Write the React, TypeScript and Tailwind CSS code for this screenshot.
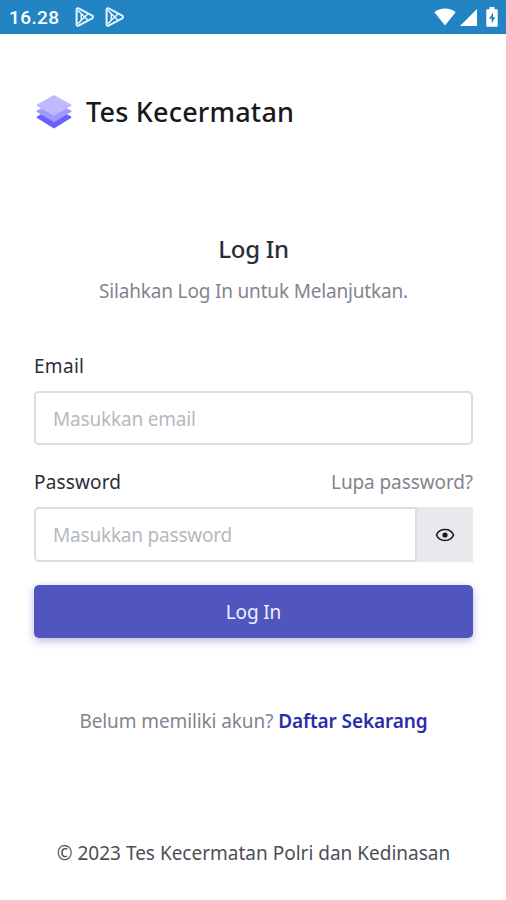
import { useState } from 'react'

function PlayIcon() {
  return (
    <svg viewBox="0 0 20 20" className="h-5 w-5" fill="none" stroke="#e6f5ff" strokeWidth="2" strokeLinejoin="round">
      <path d="M1.600 2.600c0-1.200 1-1.700 2-1.200l13.600 7.200c1.100.7 1.100 2 0 2.700L3.600 18.600c-1 .5-2 0-2-1.200z" />
      <path d="M2.800 3.200 12.800 13M2.800 16.800 12.800 7M6.300 6.600v6.800" strokeWidth="1.600" />
    </svg>
  )
}

function StatusBar() {
  return (
    <div className="flex h-[34px] items-center bg-[#2384c4] pr-[8px] pl-[9px] text-white">
      <span className="w-[66px] pt-px font-[Roboto] text-[19px] leading-none font-medium tracking-[0.4px]">16.28</span>
      <div className="flex gap-[10px]">
        <PlayIcon />
        <PlayIcon />
      </div>
      <div className="ml-auto flex items-center">
        <svg viewBox="0 0 22 18" className="h-[18px] w-[22px]" fill="currentColor">
          <path d="M11 17.5.4 4.2C3.3 1.8 7 .6 11 .6s7.700 1.200 10.600 3.600z" />
        </svg>
        <svg viewBox="0 0 17 17" className="ml-[4px] h-[17px] w-[17px]" fill="currentColor">
          <path d="M17 0v17H0z" />
        </svg>
        <svg viewBox="0 0 12 20" className="ml-[9px] h-[20px] w-[12px]">
          <path d="M3.500 0h5v2.200h2q1.200 0 1.200 1.200v15.100q0 1.200-1.200 1.200h-9q-1.200 0-1.200-1.200V3.400q0-1.200 1.200-1.200h2z" fill="#fff" />
          <path d="M7 5.500 3.200 11.700h2.500v4.800l3.500-6.200H7z" fill="#2384c4" />
        </svg>
      </div>
    </div>
  )
}

function Logo() {
  return (
    <svg viewBox="0 0 36 36" className="h-9 w-9">
      <path d="M1 22.500 18 13l17 9.500q1 .8 0 1.600L18 34.600 1 24.100q-1-.8 0-1.600z" fill="#6860fb" />
      <path d="M1 16.500 18 8l17 8.500q1.200.8 0 1.600L18 28.300 1 18.100q-1.200-.8 0-1.600z" fill="#9e99fd" />
      <path d="M1 10.500 18 1l17 9.500q1.200.8 0 1.600L18 21.800 1 12.100q-1.200-.8 0-1.600z" fill="#bdbaff" />
    </svg>
  )
}

function EyeIcon() {
  return (
    <svg viewBox="0 0 20 14" className="h-[14px] w-5" fill="none" stroke="#17171c">
      <path d="M1.500 7C3 3.500 6 1.500 10 1.500S17 3.500 18.500 7C17 10.500 14 12.500 10 12.500S3 10.500 1.500 7z" strokeWidth="1.600" />
      <circle cx="10" cy="7" r="2.600" fill="#17171c" stroke="none" />
    </svg>
  )
}

export default function App() {
  const [showPassword, setShowPassword] = useState(false)

  return (
    <div className="h-[900px] w-[506px] overflow-hidden bg-white font-['Noto_Sans',sans-serif] text-[19px] text-[#2b2e36]">
      <StatusBar />

      <main className="flex flex-col pr-[33px] pl-[34px]">
        {/* Brand */}
        <div className="mt-[58px] flex h-10 items-center gap-[14px] pl-[2px]">
          <Logo />
          <h1 className="text-[27px] leading-10 font-medium tracking-[0.2px] whitespace-nowrap text-[#17191e]">Tes Kecermatan</h1>
        </div>

        {/* Heading */}
        <div className="mt-[101px] text-center">
          <h2 className="text-2xl leading-8 font-medium tracking-[-0.3px]">Log In</h2>
          <p className="mt-[12px] leading-7 tracking-[-0.18px] whitespace-nowrap text-[#83848f]">Silahkan Log In untuk Melanjutkan.</p>
        </div>

        <form className="mt-[47px] flex flex-col" onSubmit={e => e.preventDefault()}>
          <label htmlFor="email" className="leading-7 tracking-[0.3px]"><span>Email</span></label>
          <input
            id="email"
            type="email"
            placeholder="Masukkan email"
            className="mt-[11px] h-[54px] rounded-[5px] border-2 border-[#dcdde0] px-[17px] pt-px tracking-[-0.18px] outline-none placeholder:text-[#b5b9c0]"
          />

          <div className="mt-[23px] flex justify-between leading-7">
            <label htmlFor="password" className="tracking-[0.15px]"><span>Password</span></label>
            <a href="#" className="tracking-[-0.1px] text-[#83848f]">Lupa password?</a>
          </div>
          <div className="mt-[11px] flex h-[55px]">
            <input
              id="password"
              type={showPassword ? 'text' : 'password'}
              placeholder="Masukkan password"
              className="min-w-0 flex-1 rounded-l-[5px] border-2 border-[#dcdde0] px-[17px] pt-px tracking-[-0.2px] outline-none placeholder:text-[#b5b9c0]"
            />
            <button
              type="button"
              aria-label="Password"
              onClick={() => setShowPassword(!showPassword)}
              className="flex w-14 items-center justify-center bg-[#e9e8ed]"
            >
              <EyeIcon />
            </button>
          </div>

          <button type="submit" className="mt-[23px] h-[53px] rounded-[5px] bg-[#5156be] pt-px tracking-[-0.15px] text-[#eef0ff] shadow-[0_3px_8px_rgba(81,86,190,0.4)]">
            <span>Log In</span>
          </button>
        </form>

        <p className="mt-[69px] text-center leading-7 tracking-[-0.1px] whitespace-nowrap text-[#83848f]">
          <span>Belum memiliki akun?</span>{' '}
          <a href="#" className="font-semibold text-[#2a2da8]">Daftar Sekarang</a>
        </p>

        <footer className="mt-[104px] text-center leading-7 whitespace-nowrap text-[#4c4f55]">
          © 2023 Tes Kecermatan Polri dan Kedinasan
        </footer>
      </main>
    </div>
  )
}
